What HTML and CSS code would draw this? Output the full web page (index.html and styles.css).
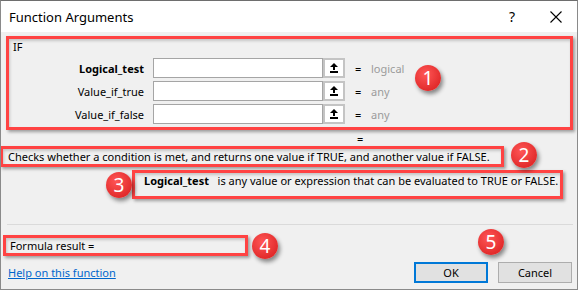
FILE: index.html
```html
<!DOCTYPE html>
<html lang="en">
<head>
  <meta charset="UTF-8" />
  <title>Function Arguments</title>
  <link rel="stylesheet" href="styles.css">
</head>
<body>
  <div class="dialog">
    <!-- Title bar -->
    <div class="titlebar">
      <span class="title">Function Arguments</span>
      <span class="help-btn">?</span>
      <svg class="close-btn" width="12" height="12" viewBox="0 0 12 12">
        <path d="M0.5 0.5 L11.5 11.5 M11.5 0.5 L0.5 11.5" stroke="#000" stroke-width="1.1" fill="none"/>
      </svg>
    </div>

    <div class="content">
      <!-- Arguments -->
      <div class="mark args">
        <div class="fn-name">IF</div>
        <div class="arg-row">
          <label class="arg-label bold">Logical_test</label>
          <span class="arg-input"></span>
          <span class="ref-btn">
            <svg width="8" height="10" viewBox="0 0 8 10"><path d="M4 0 L8 4 L5 4 L5 7 L3 7 L3 4 L0 4 Z M0 8 H8 V10 H0 Z" fill="#000"/></svg>
          </span>
          <span class="eq">=</span>
          <span class="arg-value">logical</span>
        </div>
        <div class="arg-row">
          <label class="arg-label">Value_if_true</label>
          <span class="arg-input"></span>
          <span class="ref-btn">
            <svg width="8" height="10" viewBox="0 0 8 10"><path d="M4 0 L8 4 L5 4 L5 7 L3 7 L3 4 L0 4 Z M0 8 H8 V10 H0 Z" fill="#000"/></svg>
          </span>
          <span class="eq">=</span>
          <span class="arg-value">any</span>
        </div>
        <div class="arg-row">
          <label class="arg-label">Value_if_false</label>
          <span class="arg-input"></span>
          <span class="ref-btn">
            <svg width="8" height="10" viewBox="0 0 8 10"><path d="M4 0 L8 4 L5 4 L5 7 L3 7 L3 4 L0 4 Z M0 8 H8 V10 H0 Z" fill="#000"/></svg>
          </span>
          <span class="eq">=</span>
          <span class="arg-value">any</span>
        </div>
      </div>

      <div class="result-eq">=</div>

      <div class="mark fn-desc">Checks whether a condition is met, and returns one value if TRUE, and another value if FALSE.</div>

      <div class="mark arg-desc"><b>Logical_test</b>&nbsp;&nbsp; is any value or expression that can be evaluated to TRUE or FALSE.</div>

      <div class="separator"></div>

      <div class="mark formula">Formula result =</div>

      <div class="footer">
        <a href="#" class="help-link">Help on this function</a>
        <div class="buttons">
          <button class="btn btn-default">OK</button>
          <button class="btn">Cancel</button>
        </div>
      </div>
    </div>

    <!-- numbered callouts -->
    <span class="badge badge-1">1</span>
    <span class="badge badge-2">2</span>
    <span class="badge badge-3">3</span>
    <span class="badge badge-4">4</span>
    <span class="badge badge-5">5</span>
  </div>
</body>
</html>
```

FILE: styles.css
```css
body {
  margin: 0;
  background: #fff;
  font-family: "Noto Sans", "Open Sans", sans-serif;
  font-size: 11px;
  color: #000;
}

.dialog {
  position: relative;
  width: 578px;
  height: 290px;
  box-sizing: border-box;
  background: #f0f0f0;
  border: 1px solid #8a8a8a;
  border-top-color: #6e6e6e;
  overflow: hidden;
}

/* title bar */
.titlebar {
  display: flex;
  align-items: center;
  height: 31px;
  background: #fff;
  padding-left: 8px;
}

.title {
  font-size: 13px;
  flex: 1;
}

.help-btn {
  font-size: 14px;
  margin-right: 35px;
}

.close-btn {
  margin-right: 15px;
}

.content {
  display: flex;
  flex-direction: column;
}

/* red annotation boxes */
.mark {
  border: 3px solid #ff4343;
  box-shadow: 2px 2px 3px rgba(0, 0, 0, 0.35), inset 1px 2px 3px rgba(0, 0, 0, 0.18);
  box-sizing: border-box;
}

.args {
  margin: 4px 0 0 5px;
  width: 567px;
  height: 94px;
}

.fn-name {
  height: 14px;
  line-height: 14px;
  padding: 1px 0 0 4px;
  margin-bottom: 4px;
}

.arg-row {
  display: flex;
  align-items: center;
  height: 20px;
  margin-bottom: 3px;
}

.arg-label {
  width: 135px;
  text-align: right;
  margin-right: 9px;
}

.bold {
  font-weight: bold;
}

.arg-input {
  width: 170px;
  height: 20px;
  box-sizing: border-box;
  background: #fff;
  border: 1px solid #a5a5a5;
}

.ref-btn {
  display: flex;
  align-items: center;
  justify-content: center;
  width: 22px;
  height: 20px;
  box-sizing: border-box;
  background: #fff;
  border: 2px solid #c4c4c4;
}

.eq {
  margin-left: 10px;
  width: 16px;
}

.arg-value {
  color: #9b9b9b;
}

.result-eq {
  height: 14px;
  line-height: 14px;
  margin: 2px 0 0 356px;
}

.fn-desc {
  margin-left: -1px;
  width: 504px;
  height: 21px;
  line-height: 15px;
  padding-left: 5px;
}

.arg-desc {
  margin: 3px 0 0 131px;
  width: 431px;
  height: 29px;
  line-height: 14px;
  padding: 1px 0 0 9px;
}

.separator {
  margin: 25px 0 0 6px;
  width: 566px;
  height: 1px;
  background: #dadada;
}

.formula {
  margin: 10px 0 0 2px;
  width: 245px;
  height: 21px;
  line-height: 15px;
  padding-left: 4px;
}

.footer {
  display: flex;
  align-items: center;
  justify-content: space-between;
  margin-top: 6px;
  padding: 0 5px 0 7px;
}

.help-link {
  color: #0066cc;
}

.buttons {
  display: flex;
  gap: 10px;
}

.btn {
  width: 74px;
  height: 21px;
  font: inherit;
  background: #e1e1e1;
  border: 1px solid #adadad;
  padding: 0;
  color: #000;
}

.btn-default {
  border: 2px solid #0078d7;
}

/* numbered callouts */
.badge {
  position: absolute;
  width: 26px;
  height: 26px;
  border-radius: 50%;
  background: radial-gradient(circle at 40% 35%, #ff5656, #e22c2c 70%);
  box-shadow: 2px 3px 4px rgba(0, 0, 0, 0.45);
  color: #fff;
  font-size: 19px;
  line-height: 26px;
  text-align: center;
}

.badge-1 { left: 414px; top: 64px; }
.badge-2 { left: 510px; top: 141px; }
.badge-3 { left: 105px; top: 171px; }
.badge-4 { left: 251px; top: 232px; }
.badge-5 { left: 477px; top: 228px; }
```
